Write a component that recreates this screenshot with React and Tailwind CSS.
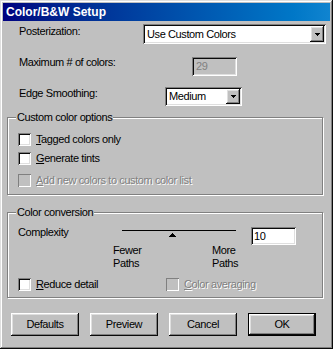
import React from 'react';

const sunken =
  'shadow-[inset_1px_1px_#808080,inset_-1px_-1px_#fff,inset_2px_2px_#0a0a0a,inset_-2px_-2px_#dfdfdf]';
const raised =
  'shadow-[inset_-1px_-1px_#0a0a0a,inset_1px_1px_#fff,inset_-2px_-2px_#808080,inset_2px_2px_#dfdfdf]';

function DownArrow() {
  return (
    <svg width="5" height="3" viewBox="0 0 5 3" shapeRendering="crispEdges">
      <rect x="0" y="0" width="5" height="1" fill="#000" />
      <rect x="1" y="1" width="3" height="1" fill="#000" />
      <rect x="2" y="2" width="1" height="1" fill="#000" />
    </svg>
  );
}

function Select({ value, className }) {
  return (
    <div className={`flex bg-white p-[2px] ${sunken} ${className}`}>
      <span className="flex-1 flex items-center pl-[2px]">{value}</span>
      <div className={`w-[14px] bg-[#c0c0c0] flex items-center justify-center ${raised}`}>
        <DownArrow />
      </div>
    </div>
  );
}

function Check({ label, accel, disabled }) {
  const rest = label.slice(1);
  return (
    <div className="flex items-center">
      <div
        className={
          disabled
            ? 'w-[13px] h-[13px] bg-[#c0c0c0] shadow-[inset_1px_1px_#808080,inset_-1px_-1px_#fff]'
            : `w-[13px] h-[13px] bg-white ${sunken}`
        }
      />
      <span
        className={
          disabled
            ? 'ml-[5px] text-[#808080] [text-shadow:1px_1px_0_#fff]'
            : 'ml-[5px]'
        }
      >
        <u>{accel}</u>
        {rest}
      </span>
    </div>
  );
}

function Group({ title, className, children }) {
  return (
    <div
      className={`relative ml-[4px] w-[316px] border border-[#808080] shadow-[1px_1px_0_#fff,inset_1px_1px_0_#fff] pl-[10px] ${className}`}
    >
      <span className="absolute top-[-7px] left-[8px] px-[1px] bg-[#c0c0c0]">{title}</span>
      {children}
    </div>
  );
}

function Button({ children, isDefault }) {
  return (
    <div
      className={`w-[68px] h-[23px] flex items-center justify-center pb-[1px] ${raised} ${
        isDefault ? 'outline outline-1 outline-black -outline-offset-1 shadow-[inset_-2px_-2px_#0a0a0a,inset_2px_2px_#fff,inset_-3px_-3px_#808080,inset_3px_3px_#dfdfdf]' : ''
      }`}
    >
      {children}
    </div>
  );
}

export default function App() {
  return (
    <div className="w-[333px] h-[349px] bg-[#c0c0c0] p-[3px] flex flex-col font-['Liberation_Sans',Arial,sans-serif] text-[11px] leading-[13px] tracking-[-0.4px] text-black shadow-[inset_-1px_-1px_#0a0a0a,inset_1px_1px_#dfdfdf,inset_-2px_-2px_#808080,inset_2px_2px_#fff]">
      <div className="h-[18px] shrink-0 flex items-center pl-[3px] bg-linear-to-r from-[#000080] to-[#1084d0] text-white font-bold text-[12px] tracking-[0px]">
        Color/B&amp;W Setup
      </div>

      <div className="mt-[3px] flex items-start pl-[16px]">
        <span className="w-[124px] mt-[1px]">Posterization:</span>
        <Select value="Use Custom Colors" className="w-[183px] h-[20px]" />
      </div>

      <div className="mt-[13px] flex items-start pl-[16px]">
        <span className="w-[173px] -mt-px">Maximum # of colors:</span>
        <div className={`w-[45px] h-[19px] flex items-center pl-[4px] text-[#808080] bg-[#c0c0c0] ${sunken}`}>29</div>
      </div>

      <div className="mt-[11px] flex items-start pl-[16px]">
        <span className="w-[146px]">Edge Smoothing:</span>
        <Select value="Medium" className="w-[77px] h-[19px]" />
      </div>

      <Group title="Custom color options" className="mt-[11px] h-[78px] pt-[15px]">
        <Check accel="T" label="Tagged colors only" />
        <div className="mt-[6px]">
          <Check accel="G" label="Generate tints" />
        </div>
        <div className="mt-[9px]">
          <Check accel="A" label="Add new colors to custom color list" disabled />
        </div>
      </Group>

      <Group title="Color conversion" className="mt-[17px] h-[86px] pt-[13px]">
        <div className="flex items-start">
          <span className="w-[95px]">Complexity</span>
          <div className="w-[127px] flex flex-col">
            <div className="mt-[4px] ml-[9px] w-[114px] h-px bg-black" />
            <svg className="mt-[2px] ml-[56px]" width="7" height="4" viewBox="0 0 7 4" shapeRendering="crispEdges">
              <rect x="3" y="0" width="1" height="1" fill="#000" />
              <rect x="2" y="1" width="3" height="1" fill="#000" />
              <rect x="1" y="2" width="5" height="1" fill="#000" />
              <rect x="0" y="3" width="7" height="1" fill="#000" />
            </svg>
            <div className="mt-[7px] flex">
              <div className="w-[99px]">
                Fewer
                <br />
                Paths
              </div>
              <div>
                More
                <br />
                Paths
              </div>
            </div>
          </div>
          <div className={`ml-[11px] mt-[1px] w-[45px] h-[18px] flex items-center pl-[3px] bg-white ${sunken}`}>10</div>
        </div>
        <div className="mt-[8px] flex items-center">
          <div className="w-[148px]">
            <Check accel="R" label="Reduce detail" />
          </div>
          <Check accel="C" label="Color averaging" disabled />
        </div>
      </Group>

      <div className="mt-[15px] ml-[8px] flex gap-[11px]">
        <Button>Defaults</Button>
        <Button>Preview</Button>
        <Button>Cancel</Button>
        <Button isDefault>OK</Button>
      </div>
    </div>
  );
}
